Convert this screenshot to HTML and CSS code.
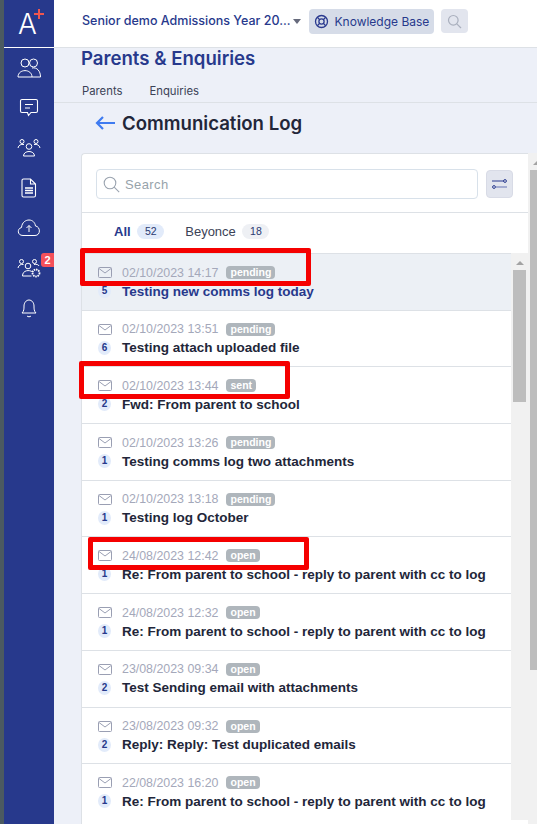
FILE: index.html
```html
<!DOCTYPE html>
<html lang="en">

<head>
  <meta charset="UTF-8">
  <title>Communication Log</title>
  <link rel="stylesheet" href="styles.css">
</head>

<body>
  <div class="app">
    <div class="edge"></div>
    <aside class="sidebar">
      <div class="logo">
        <span class="logo-a">A</span>
        <svg class="logo-plus" width="12" height="12" viewBox="0 0 12 12"><path d="M6 1v10M1 6h10" stroke="#f0564f" stroke-width="2" fill="none"/></svg>
      </div>
      <ul class="nav">
        <li>
          <svg width="24" height="20" viewBox="0 0 24 20" fill="none" stroke="#fff" stroke-width="1"><circle cx="8" cy="5" r="4"/><circle cx="16.500" cy="5" r="4"/><path d="M1 19c0-8.500 14-8.500 14 0zM15 10c5-1 8.500 3 8.500 9H15"/></svg>
        </li>
        <li>
          <svg width="20" height="20" viewBox="0 0 20 20" fill="none" stroke="#fff" stroke-width="1.100"><path d="M3 1.500h14a1.500 1.500 0 0 1 1.500 1.500v10a1.500 1.500 0 0 1-1.500 1.500h-5l-2.500 3-1-3H3a1.500 1.500 0 0 1-1.500-1.500V3A1.500 1.500 0 0 1 3 1.500z"/><path d="M6 6.500h8M6 10h5"/></svg>
        </li>
        <li>
          <svg width="24" height="20" viewBox="0 0 24 20" fill="none" stroke="#fff" stroke-width="1"><circle cx="12" cy="8.500" r="2.800"/><circle cx="5" cy="3.500" r="2"/><circle cx="19" cy="3.500" r="2"/><path d="M1 10c.5-3 3-4 6-3.500M23 10c-.5-3-3-4-6-3.500M6.500 18c0-6 11-6 11 0z"/></svg>
        </li>
        <li>
          <svg width="16" height="20" viewBox="0 0 16 20" fill="none" stroke="#fff" stroke-width="1.100"><path d="M2.500 1h7l5 5v11.500a1.500 1.500 0 0 1-1.500 1.500H2.500A1.500 1.500 0 0 1 1 17.500v-15A1.500 1.500 0 0 1 2.500 1zM9.500 1v5h5"/><path d="M4 10h8M4 12.500h8M4 15h8" stroke-width="1.300"/></svg>
        </li>
        <li>
          <svg width="24" height="18" viewBox="0 0 24 18" fill="none" stroke="#fff" stroke-width="1"><path d="M6 16.500c-6 0-6-7-1.500-8C5 3 9 1 12 1c3.500 0 6 2.500 6.500 6 5 .5 5.500 9.500-.5 9.500z"/><path d="M12 13V6.500M9.500 9l2.500-2.500 2.500 2.500"/></svg>
        </li>
        <li class="nav-badged">
          <svg width="24" height="20" viewBox="0 0 24 20" fill="none" stroke="#fff" stroke-width="1"><circle cx="11" cy="8" r="2.800"/><circle cx="4.500" cy="3.500" r="2"/><circle cx="17.500" cy="3.500" r="2"/><path d="M1 10c.5-3 3-4 5.500-3.500M22 8c-.5-1.500-2.500-2-5-1.500M5.500 18c0-6 7-6.500 10-4M5.500 18h9"/><circle cx="19" cy="15" r="3.500" stroke-width="1.800" stroke-dasharray="1.500 .8"/></svg>
          <span class="nav-badge">2</span>
        </li>
        <li>
          <svg width="16" height="20" viewBox="0 0 16 20" fill="none" stroke="#fff" stroke-width="1"><path d="M1 15c2-2 2-4 2-7 0-3 2-6 5-6s5 3 5 6c0 3 0 5 2 7z"/><path d="M6 18c1 1 3 1 4 0"/></svg>
        </li>
      </ul>
    </aside>

    <div class="content">
      <header class="topbar">
        <div class="school">Senior demo Admissions Year 20...</div>
        <span class="caret"></span>
        <button class="kb">
          <svg width="15" height="15" viewBox="0 0 15 15" fill="none" stroke="#2a3a8f" stroke-width="1.300"><circle cx="7.500" cy="7.500" r="6"/><circle cx="7.500" cy="7.500" r="2.600"/><path d="M3.300 3.300l2.300 2.300M11.700 3.300L9.400 5.600M3.300 11.700l2.300-2.300M11.700 11.700L9.400 9.400"/></svg>
          Knowledge Base
        </button>
        <button class="top-search">
          <svg width="15" height="15" viewBox="0 0 15 15" fill="none" stroke="#a9afbd" stroke-width="1.200"><circle cx="6.300" cy="6.300" r="4.800"/><path d="M9.800 9.800l4.200 4.200"/></svg>
        </button>
      </header>

      <div class="page-head">
        <h1>Parents &amp; Enquiries</h1>
        <div class="tabs">
          <span>Parents</span>
          <span>Enquiries</span>
        </div>
      </div>

      <div class="log-title">
        <svg width="20" height="14" viewBox="0 0 20 14" fill="none" stroke="#3f7bf0" stroke-width="2.200"><path d="M20 7H2M8 1L2 7l6 6"/></svg>
        <h2>Communication Log</h2>
      </div>

      <div class="panel-wrap">
        <section class="panel">
          <div class="search-row">
            <div class="search">
              <svg width="17" height="17" viewBox="0 0 17 17" fill="none" stroke="#9aa3af" stroke-width="1.100"><circle cx="7" cy="7" r="5.800"/><path d="M11.200 11.200l5 5"/></svg>
              <span>Search</span>
            </div>
            <button class="filter">
              <svg width="15" height="10" viewBox="0 0 15 10" fill="none" stroke="#2a3a8f" stroke-width="1"><path d="M0 2h12"/><circle cx="13" cy="2" r="1.400"/><circle cx="2" cy="8" r="1.400"/><path d="M4 8h11" stroke="#8a94c4" stroke-width="1.400"/></svg>
            </button>
          </div>
          <div class="owners">
            <span class="owner owner-on">All <b>52</b></span>
            <span class="owner">Beyonce <b class="grey">18</b></span>
          </div>
          <div class="list-wrap">
            <ul class="list">
              <li class="row row-on">
                <div class="meta"><svg class="env" width="14" height="11" viewBox="0 0 14 11"><use href="#env"/></svg><time>02/10/2023 14:17</time><span class="tag">pending</span></div>
                <div class="subj"><span class="count">5</span><span class="title">Testing new comms log today</span></div>
              </li>
              <li class="row">
                <div class="meta"><svg class="env" width="14" height="11" viewBox="0 0 14 11"><use href="#env"/></svg><time>02/10/2023 13:51</time><span class="tag">pending</span></div>
                <div class="subj"><span class="count">6</span><span class="title">Testing attach uploaded file</span></div>
              </li>
              <li class="row">
                <div class="meta"><svg class="env" width="14" height="11" viewBox="0 0 14 11"><use href="#env"/></svg><time>02/10/2023 13:44</time><span class="tag">sent</span></div>
                <div class="subj"><span class="count">2</span><span class="title">Fwd: From parent to school</span></div>
              </li>
              <li class="row">
                <div class="meta"><svg class="env" width="14" height="11" viewBox="0 0 14 11"><use href="#env"/></svg><time>02/10/2023 13:26</time><span class="tag">pending</span></div>
                <div class="subj"><span class="count">1</span><span class="title">Testing comms log two attachments</span></div>
              </li>
              <li class="row">
                <div class="meta"><svg class="env" width="14" height="11" viewBox="0 0 14 11"><use href="#env"/></svg><time>02/10/2023 13:18</time><span class="tag">pending</span></div>
                <div class="subj"><span class="count">1</span><span class="title">Testing log October</span></div>
              </li>
              <li class="row">
                <div class="meta"><svg class="env" width="14" height="11" viewBox="0 0 14 11"><use href="#env"/></svg><time>24/08/2023 12:42</time><span class="tag">open</span></div>
                <div class="subj"><span class="count">1</span><span class="title">Re: From parent to school - reply to parent with cc to log</span></div>
              </li>
              <li class="row">
                <div class="meta"><svg class="env" width="14" height="11" viewBox="0 0 14 11"><use href="#env"/></svg><time>24/08/2023 12:32</time><span class="tag">open</span></div>
                <div class="subj"><span class="count">1</span><span class="title">Re: From parent to school - reply to parent with cc to log</span></div>
              </li>
              <li class="row">
                <div class="meta"><svg class="env" width="14" height="11" viewBox="0 0 14 11"><use href="#env"/></svg><time>23/08/2023 09:34</time><span class="tag">open</span></div>
                <div class="subj"><span class="count">2</span><span class="title">Test Sending email with attachments</span></div>
              </li>
              <li class="row">
                <div class="meta"><svg class="env" width="14" height="11" viewBox="0 0 14 11"><use href="#env"/></svg><time>23/08/2023 09:32</time><span class="tag">open</span></div>
                <div class="subj"><span class="count">2</span><span class="title">Reply: Reply: Test duplicated emails</span></div>
              </li>
              <li class="row">
                <div class="meta"><svg class="env" width="14" height="11" viewBox="0 0 14 11"><use href="#env"/></svg><time>22/08/2023 16:20</time><span class="tag">open</span></div>
                <div class="subj"><span class="count">1</span><span class="title">Re: From parent to school - reply to parent with cc to log</span></div>
              </li>
            </ul>
            <div class="bar bar-inner"><i class="bar-up"></i><i class="bar-thumb"></i></div>
          </div>
        </section>
        <div class="bar bar-outer"><i class="bar-up"></i><i class="bar-thumb"></i></div>
      </div>
    </div>
  </div>

  <svg width="0" height="0" class="defs">
    <symbol id="env" viewBox="0 0 14 11"><rect x=".5" y=".5" width="13" height="10" rx="1" fill="none" stroke="#9a9fb3"/><path d="M1 1.500l6 4.500 6-4.500" fill="none" stroke="#9a9fb3"/></symbol>
  </svg>

  <!-- highlight boxes drawn over the screenshot -->
  <div class="mark mark-1"></div>
  <div class="mark mark-2"></div>
  <div class="mark mark-3"></div>
</body>

</html>
```

FILE: styles.css
```css
/* Reset */

*,
*::before,
*::after {
  box-sizing: border-box;
  margin: 0;
  padding: 0;
}

:root {
  --navy: #27398c;
  --bg: #edf0f8;
  --line: #dde1e6;
  --text: #222639;
}

body {
  font-family: "Liberation Sans", Arial, sans-serif;
  background: var(--bg);
  color: var(--text);
  width: 537px;
  height: 824px;
  overflow: hidden;
  position: relative;
}

button {
  border: 0;
  font: inherit;
}

.defs {
  position: absolute;
}

/* Layout */

.app {
  display: flex;
  height: 824px;
}

.edge {
  width: 4px;
  background: #4b5a61;
  flex-shrink: 0;
}

/* Sidebar */

.sidebar {
  width: 50px;
  background: var(--navy);
  flex-shrink: 0;
}

.logo {
  height: 48px;
  border-bottom: 1px solid #fff;
  position: relative;
}

.logo-a {
  position: absolute;
  left: 14px;
  top: 7px;
  color: #fff;
  font-family: Inter, sans-serif;
  font-size: 28px;
  line-height: 34px;
  font-weight: 300;
}

.logo-plus {
  position: absolute;
  left: 29px;
  top: 8px;
}

.nav {
  list-style: none;
}

.nav li {
  height: 40px;
  display: flex;
  align-items: center;
  justify-content: center;
  position: relative;
}

.nav-badge {
  position: absolute;
  left: 37px;
  top: 5px;
  width: 13px;
  height: 14px;
  background: #f4505a;
  color: #fff;
  font-size: 11px;
  font-weight: bold;
  line-height: 14px;
  text-align: center;
  border-radius: 3px 0 0 3px;
}

/* Top bar */

.content {
  flex: 1;
  min-width: 0;
}

.topbar {
  height: 48px;
  background: #fff;
  border-bottom: 1px solid var(--line);
  display: flex;
  align-items: center;
  padding: 0 0 5px 28px;
}

.school {
  font-family: Inter, sans-serif;
  font-size: 12.5px;
  font-weight: 500;
  color: var(--navy);
  white-space: nowrap;
  margin-bottom: 2px;
}

.caret {
  width: 0;
  height: 0;
  border: 4px solid transparent;
  border-top: 5px solid #666a7c;
  border-bottom: 0;
  margin-left: 2px;
}

.kb {
  height: 25px;
  width: 125px;
  margin-left: 8px;
  background: #d6dce8;
  color: var(--navy);
  border-radius: 4px;
  font-family: Inter, sans-serif;
  font-size: 12px;
  display: flex;
  align-items: center;
  gap: 6px;
  padding-left: 5px;
}

.top-search {
  width: 27px;
  height: 24px;
  margin-left: 7px;
  background: #e2e5ee;
  border-radius: 4px;
  display: flex;
  align-items: center;
  justify-content: center;
}

/* Page heading */

.page-head {
  height: 55px;
  padding-left: 27px;
  border-bottom: 1px solid var(--line);
}

.page-head h1 {
  font-family: Inter, sans-serif;
  font-size: 18.6px;
  line-height: 20px;
  font-weight: 600;
  color: var(--navy);
}

.tabs {
  display: flex;
  gap: 27px;
  margin-top: 16px;
  padding-left: 1px;
  font-family: Inter, sans-serif;
  font-size: 11.3px;
  color: #3b4256;
}

.log-title {
  height: 50px;
  padding: 0 0 10px 41px;
  display: flex;
  align-items: center;
  gap: 7px;
}

.log-title h2 {
  font-family: Inter, sans-serif;
  font-size: 18.6px;
  font-weight: 600;
  color: var(--text);
}

/* Panel */

.panel-wrap {
  display: flex;
  padding-left: 27px;
}

.panel {
  width: 447px;
  height: 680px;
  flex-shrink: 0;
  background: #fff;
  border: 1px solid var(--line);
  border-right: 0;
  border-radius: 4px 0 0 0;
}

.search-row {
  height: 59px;
  padding: 15px 15px 0 14px;
  display: flex;
  gap: 8px;
  border-bottom: 1px solid var(--line);
}

.search {
  width: 384px;
  height: 30px;
  border: 1px solid #d8e1ea;
  border-radius: 4px;
  display: flex;
  align-items: center;
  gap: 5px;
  padding-left: 6px;
  font-size: 13px;
  letter-spacing: .4px;
  color: #97a3ab;
}

.filter {
  width: 27px;
  height: 28px;
  margin-top: 1px;
  background: #e2e5ee;
  border: 1px solid #d8dbe6;
  border-radius: 4px;
  display: flex;
  align-items: center;
  justify-content: center;
}

.owners {
  height: 40px;
  padding: 0 0 3px 32px;
  display: flex;
  align-items: center;
  gap: 21px;
  font-size: 13px;
  color: #3b4256;
}

.owner b {
  display: inline-block;
  width: 27px;
  height: 15px;
  margin-left: 3px;
  border-radius: 8px;
  background: #e2ebfa;
  color: #2a3a70;
  font-size: 10.5px;
  font-weight: normal;
  line-height: 15px;
  text-align: center;
  vertical-align: 1px;
}

.owner b.grey {
  background: #eef0f4;
}

.owner-on {
  color: var(--navy);
  font-weight: bold;
}

/* List */

.list-wrap {
  display: flex;
}

.list {
  list-style: none;
  width: 429px;
}

.row {
  height: 56.7px;
  border-top: 1px solid var(--line);
  padding: 11px 0 0 16px;
}

.row-on {
  background: #ecf0f5;
}

.meta {
  display: flex;
  align-items: center;
  height: 15px;
  font-size: 12.4px;
  color: #a4a8ba;
}

.env {
  margin-right: 10px;
}

.tag {
  margin-left: 8px;
  padding: 0 4px;
  height: 13px;
  background: #afb6bc;
  color: #fff;
  border-radius: 4px;
  font-size: 10.5px;
  font-weight: bold;
  line-height: 13px;
}

.subj {
  display: flex;
  align-items: center;
  margin-top: 3px;
  height: 16px;
}

.count {
  width: 13px;
  height: 14px;
  margin-right: 11px;
  border-radius: 50%;
  background: #e2ebfa;
  color: var(--navy);
  font-size: 10px;
  font-weight: bold;
  line-height: 14px;
  text-align: center;
  flex-shrink: 0;
}

.title {
  font-size: 13.5px;
  font-weight: bold;
  color: var(--text);
  white-space: nowrap;
}

.row-on .title {
  color: var(--navy);
}

/* Scrollbars */

.bar {
  width: 17px;
  background: #f1f1f1;
  flex-shrink: 0;
  display: flex;
  flex-direction: column;
  align-items: center;
}

.bar-up {
  width: 0;
  height: 0;
  margin: 8px 0 5px;
  border: 4px solid transparent;
  border-bottom: 4px solid #a3a3a3;
  border-top: 0;
}

.bar-thumb {
  width: 13px;
  height: 132px;
  background: #bdbdbd;
}

.bar-outer {
  height: 680px;
}

.bar-outer .bar-thumb {
  height: 500px;
}

/* Red highlight boxes */

.mark {
  position: absolute;
  border: 5px solid #f50000;
  border-radius: 2px;
}

.mark-1 {
  left: 80px;
  top: 248px;
  width: 231px;
  height: 38px;
}

.mark-2 {
  left: 79px;
  top: 361px;
  width: 211px;
  height: 38px;
}

.mark-3 {
  left: 88px;
  top: 537px;
  width: 221px;
  height: 33px;
}
```
